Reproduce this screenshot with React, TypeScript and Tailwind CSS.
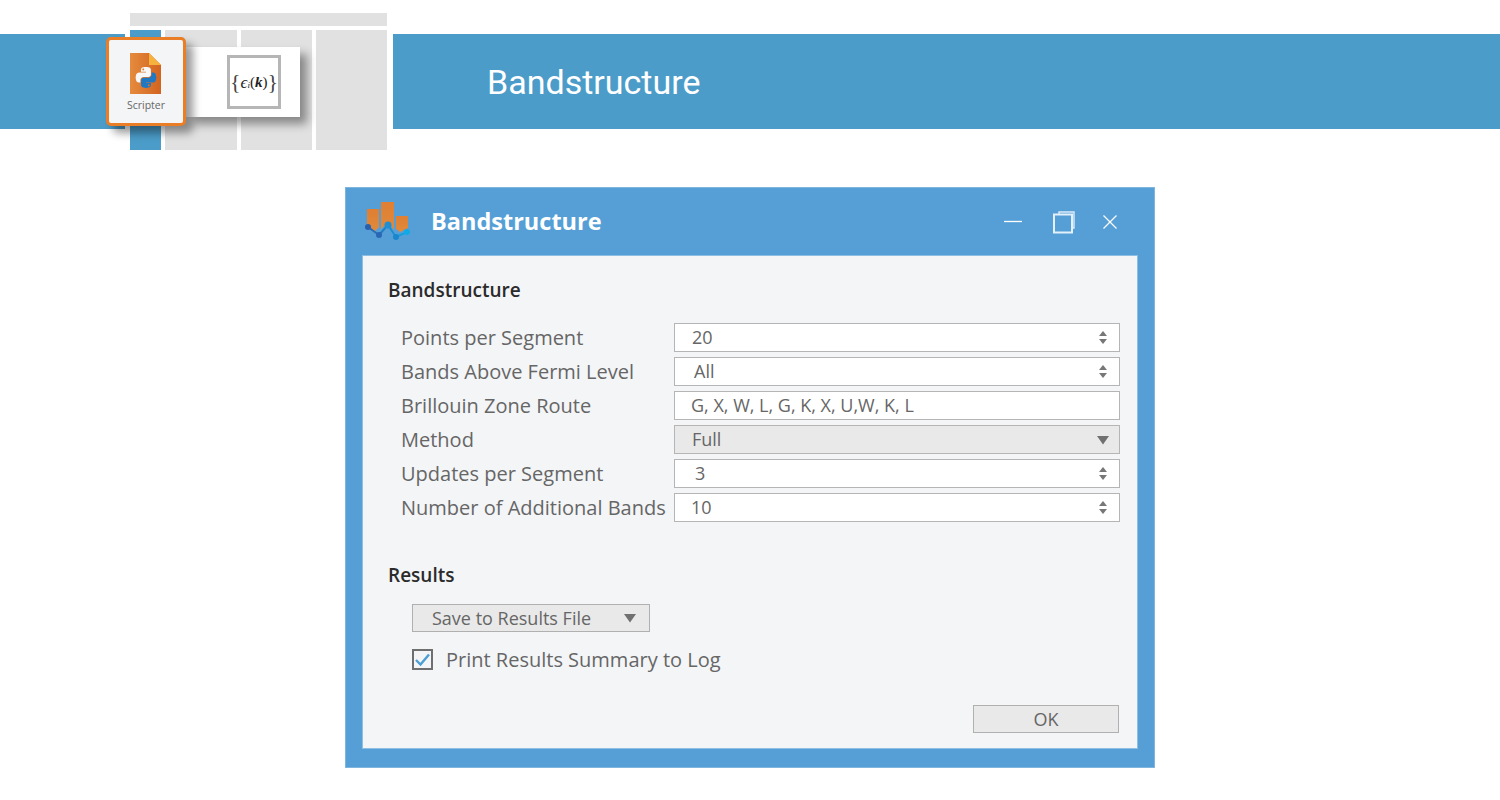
import React from "react";

const Spin = () => (
  <svg width="10" height="15" viewBox="0 0 10 15" className="shrink-0">
    <path d="M5 1 L9 6 H1 Z" fill="#777" />
    <path d="M1 9 H9 L5 14 Z" fill="#777" />
  </svg>
);

const Caret = () => (
  <svg width="14" height="10" viewBox="0 0 14 10" className="shrink-0">
    <path d="M1 1 H13 L7 9.5 Z" fill="#707070" />
  </svg>
);

const rows: { label: string; value: string; pad: string; kind: "spin" | "text" | "drop" }[] = [
  { label: "Points per Segment", value: "20", pad: "pl-[17px]", kind: "spin" },
  { label: "Bands Above Fermi Level", value: "All", pad: "pl-[19px]", kind: "spin" },
  { label: "Brillouin Zone Route", value: "G, X, W, L, G, K, X, U,W, K, L", pad: "pl-[16px]", kind: "text" },
  { label: "Method", value: "Full", pad: "pl-[17px]", kind: "drop" },
  { label: "Updates per Segment", value: "3", pad: "pl-[20px]", kind: "spin" },
  { label: "Number of Additional Bands", value: "10", pad: "pl-[16px]", kind: "spin" },
];

const ScripterIcon = () => (
  <svg width="32" height="41" viewBox="0 0 32 41">
    <defs>
      <linearGradient id="docg" x1="0" y1="0" x2="1" y2="0">
        <stop offset="0" stopColor="#e58b3e" />
        <stop offset="1" stopColor="#d2641f" />
      </linearGradient>
    </defs>
    <path d="M0 0 H19 L31 12 V41 H0 Z" fill="url(#docg)" />
    <path d="M19 0 L31 12 H19 Z" fill="#f6b23c" />
    <g transform="translate(5.5 14) scale(0.19)">
      <path
        fill="#f7f7f7"
        d="M54.9 0c-4.6 0-9 .4-12.8 1.1C30.8 3.1 28.8 7.2 28.8 14.9V25h26.1v3.4H19c-7.6 0-14.2 4.6-16.3 13.2-2.4 10-2.5 16.2 0 26.6 1.9 7.7 6.3 13.2 13.9 13.2h9v-12c0-8.7 7.5-16.4 16.4-16.4h26.1c7.3 0 13-6 13-13.3V14.9c0-7.1-6-12.4-13-13.6C63.6.4 59.5 0 54.9 0zM40.8 8.1c2.7 0 4.9 2.2 4.9 5 0 2.7-2.2 4.9-4.9 4.9-2.7 0-4.9-2.2-4.9-4.9 0-2.8 2.2-5 4.9-5z"
      />
      <path
        fill="#1f78c4"
        d="M84.8 28.4v11.6c0 9-7.6 16.6-16.4 16.6H42.3c-7.2 0-13 6.1-13 13.3v24.9c0 7.1 6.2 11.3 13 13.3 8.2 2.4 16.1 2.8 26.1 0 6.5-1.9 13-5.7 13-13.3v-10H55.3v-3.4h39.1c7.6 0 10.4-5.3 13-13.2 2.7-8.2 2.6-16 0-26.6-1.9-7.6-5.4-13.2-13-13.2H84.8zM70.1 91.4c2.7 0 4.9 2.2 4.9 4.9 0 2.8-2.2 5-4.9 5-2.7 0-4.9-2.2-4.9-5 0-2.7 2.2-4.9 4.9-4.9z"
      />
    </g>
  </svg>
);

const BandLogo = () => (
  <svg width="46" height="40" viewBox="0 0 46 40" className="shrink-0">
    <defs>
      <linearGradient id="barg" x1="0" y1="0" x2="0" y2="1">
        <stop offset="0" stopColor="#df7f33" />
        <stop offset="1" stopColor="#e08a3c" />
      </linearGradient>
      <linearGradient id="lineg" x1="0" y1="0" x2="1" y2="0">
        <stop offset="0" stopColor="#2a62ae" />
        <stop offset="1" stopColor="#12a9e6" />
      </linearGradient>
    </defs>
    <path d="M3 7 H15 V25 L11 29 L3 24 Z" fill="url(#barg)" />
    <path d="M17 0 H30 V28 L26 22 L20 24 L17 27 Z" fill="url(#barg)" />
    <path d="M32 14 H44 V26 L36 30 L32 27 Z" fill="url(#barg)" />
    <path d="M4 25 L15 33 L24 23 L32 35 L43 30" fill="none" stroke="url(#lineg)" strokeWidth="2" gradientUnits="userSpaceOnUse" />
    <circle cx="4" cy="25" r="3" fill="#2a5fae" />
    <circle cx="15" cy="33" r="3" fill="#2a66b4" />
    <circle cx="24" cy="23" r="3.5" fill="#1f8ed2" />
    <circle cx="32" cy="35" r="3" fill="#1b86cc" />
    <circle cx="43" cy="30" r="3" fill="#12a9e6" />
  </svg>
);

export default function App() {
  return (
    <div className="relative h-[800px] w-[1500px] overflow-hidden bg-white" style={{ fontFamily: '"Open Sans", sans-serif' }}>
      <header className="flex h-[150px] items-start">
        <div className="mt-[34px] h-[95px] w-[125px] bg-[#4b9cc8]" />
        <div className="relative flex h-[150px] w-[268px] flex-col gap-[4px] pl-[5px] pt-[13px]">
          <div className="h-[13px] w-[257px] bg-[#e1e1e1]" />
          <div className="flex h-[120px] w-[257px] gap-[4px]">
            <div className="w-[31px] bg-[#4b9cc8]" />
            <div className="w-[72px] bg-[#e1e1e1]" />
            <div className="w-[72px] bg-[#e1e1e1]" />
            <div className="w-[71px] bg-[#e1e1e1]" />
          </div>

          <div className="absolute left-[61px] top-[47px] flex h-[70px] w-[114px] items-center justify-center bg-white pl-[22px] shadow-[7px_7px_9px_rgba(0,0,0,0.4)]">
            <div
              className="flex h-[54px] w-[54px] items-center justify-center border-[3px] border-[#b6b6b6] bg-white text-[#222]"
              style={{ fontFamily: '"Liberation Serif", serif' }}
            >
              <span className="text-[22px] font-light leading-none text-[#444]">{"{"}</span>
              <span className="text-[17px] italic leading-none">ϵ</span>
              <span className="mt-[7px] text-[9px] italic leading-none">i</span>
              <span className="text-[15px] leading-none">(</span>
              <span className="text-[15px] font-bold italic leading-none">k</span>
              <span className="text-[15px] leading-none">)</span>
              <span className="text-[22px] font-light leading-none text-[#444]">{"}"}</span>
            </div>
          </div>

          <div className="absolute left-[-19px] top-[37px] flex h-[89px] w-[80px] flex-col items-center rounded-[5px] border-[3px] border-[#ea7e26] bg-[#f4f5f7] pt-[13px] shadow-[7px_7px_9px_rgba(0,0,0,0.4)]">
            <ScripterIcon />
            <span className="mt-[4px] text-[10.5px] leading-[14px] text-[#666]">Scripter</span>
          </div>
        </div>
        <div className="mt-[34px] flex h-[95px] flex-1 items-center bg-[#4b9cc8] pl-[94px]">
          <span className="text-[34px] leading-none text-white" style={{ fontFamily: "Roboto, sans-serif" }}>
            Bandstructure
          </span>
        </div>
      </header>

      <main className="mx-auto mt-[37px] flex h-[581px] w-[810px] flex-col border border-[#7fb6e0] bg-[#559fd6] px-[16px] pb-[18px]">
        <div className="flex h-[67px] items-center">
          <div className="ml-[2px] flex w-[67px] shrink-0 items-center">
            <BandLogo />
          </div>
          <span className="text-[23.5px] font-bold leading-none text-white">Bandstructure</span>
          <div className="ml-auto flex items-center pr-[4px]">
            <svg width="20" height="3" viewBox="0 0 20 3" className="mr-[29px]">
              <path d="M1 1.5 H19" stroke="#fff" strokeWidth="1.3" />
            </svg>
            <svg width="24" height="24" viewBox="0 0 24 24" className="mr-[26px]" fill="none">
              <path d="M7 4 V2 H22 V18 H20" stroke="#dcecf8" strokeWidth="1.4" />
              <rect x="2" y="4.5" width="18" height="18" stroke="#e4f0fa" strokeWidth="2" />
            </svg>
            <svg width="16" height="16" viewBox="0 0 16 16" className="mr-[16px]" fill="none">
              <path d="M1.5 1.5 L14.5 14.5 M14.5 1.5 L1.5 14.5" stroke="#fff" strokeWidth="1.2" />
            </svg>
          </div>
        </div>

        <section className="flex h-[494px] flex-col border border-[#8dbfe4] bg-[#f4f5f7] pl-[25px] pr-[17px] pt-[19px]">
          <h2 className="h-[30px] text-[19px] font-semibold leading-[30px] text-[#2b2b2b]">Bandstructure</h2>

          <div className="mt-[18px] flex flex-col gap-[5px] pl-[13px]">
            {rows.map((r) => (
              <div key={r.label} className="flex h-[29px] items-center">
                <span className="w-[273px] shrink-0 text-[20px] leading-[29px] text-[#666]">{r.label}</span>
                <div
                  className={
                    "flex h-[29px] w-[446px] items-center border border-[#b5b5b5] text-[18px] text-[#666] " +
                    r.pad +
                    (r.kind === "drop" ? " bg-[#e9e9e9]" : " bg-white")
                  }
                >
                  <span className="flex-1 leading-[27px]">{r.value}</span>
                  {r.kind === "spin" && (
                    <span className="mr-[11px] flex">
                      <Spin />
                    </span>
                  )}
                  {r.kind === "drop" && (
                    <span className="mr-[9px] flex">
                      <Caret />
                    </span>
                  )}
                </div>
              </div>
            ))}
          </div>

          <h2 className="mt-[38px] h-[30px] text-[19px] font-semibold leading-[30px] text-[#2b2b2b]">Results</h2>

          <div className="ml-[24px] mt-[14px] flex h-[28px] w-[238px] items-center border border-[#b0b0b0] bg-[#e9e9e9] pl-[19px] text-[18px] text-[#666]">
            <span className="flex-1 leading-[26px]">Save to Results File</span>
            <span className="mr-[12px] flex">
              <Caret />
            </span>
          </div>

          <div className="ml-[24px] mt-[17px] flex h-[21px] items-center">
            <span className="flex h-[21px] w-[21px] items-center justify-center border-2 border-[#6f6f6f] bg-[#f4f5f7]">
              <svg width="17" height="15" viewBox="0 0 17 15" fill="none">
                <path d="M2 8 L6.5 12.5 L15 2.5" stroke="#4b9fd3" strokeWidth="2.4" />
              </svg>
            </span>
            <span className="ml-[13px] text-[20px] leading-[24px] text-[#666]">Print Results Summary to Log</span>
          </div>

          <div className="mt-[35px] flex justify-end pr-[1px]">
            <button className="h-[28px] w-[146px] border border-[#b0b0b0] bg-[#e9e9e9] text-[18px] leading-[26px] text-[#666]">
              OK
            </button>
          </div>
        </section>
      </main>
    </div>
  );
}
